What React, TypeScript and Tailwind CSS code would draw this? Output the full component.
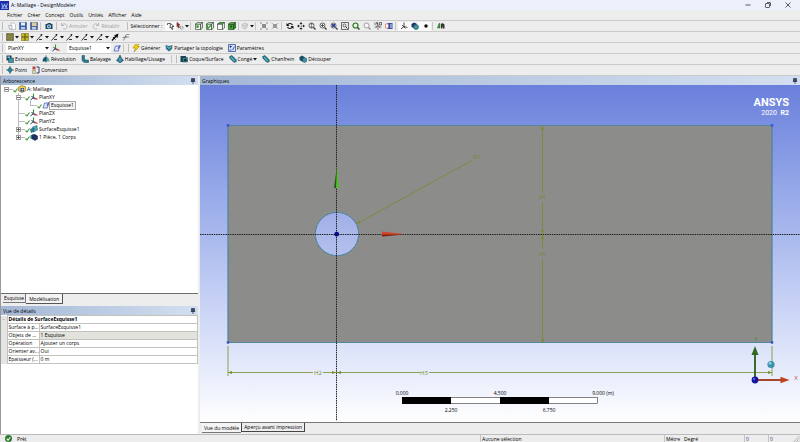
import React from 'react';
import clsx from 'clsx';

interface IconProps {
  children: React.ReactNode;
  className?: string;
}

const Icon: React.FC<IconProps> = ({ children, className = 'w-2 h-2' }) => (
  <svg viewBox="0 0 16 16" fill="none" className={clsx('shrink-0', className)} aria-hidden="true">
    {children}
  </svg>
);

const Caret = () => (
  <svg viewBox="0 0 8 8" className="w-1 h-1 shrink-0" aria-hidden="true">
    <path d="M0 2h8L4 7z" fill="#111" />
  </svg>
);

/* ---------- toolbar drawings ---------- */

const magnifier = (stroke: string, inner?: React.ReactNode) => (
  <>
    <circle cx="7" cy="7" r="5" stroke={stroke} strokeWidth="1.6" fill="#f6f6f6" />
    <path d="M11 11l4 4" stroke={stroke} strokeWidth="2.6" />
    {inner}
  </>
);

const cube = (front: string, top: string, side: string) => (
  <>
    <path d="M1 4h10v11H1z" fill={front} stroke="#1d3a1d" strokeWidth="1.2" />
    <path d="M1 4l4-3h10l-4 3z" fill={top} stroke="#1d3a1d" strokeWidth="1.2" />
    <path d="M11 4l4-3v11l-4 3z" fill={side} stroke="#1d3a1d" strokeWidth="1.2" />
  </>
);

const ICONS: Record<string, React.ReactNode> = {
  new: (
    <>
      <path d="M6 2h6l3 3v10H6z" fill="#fff" stroke="#8a9099" />
      <path d="M1 7h7v7H3z" fill="#e8edf5" stroke="#7d8896" />
    </>
  ),
  save: (
    <>
      <path d="M1 1h14v14H1z" fill="#3c5fa8" stroke="#27427c" />
      <path d="M4 1h8v6H4z" fill="#eaf0fa" />
      <path d="M4 10h8v5H4z" fill="#b9c9e6" />
    </>
  ),
  saveAs: (
    <>
      <path d="M1 1h14v14H1z" fill="#4b67a4" stroke="#2d447a" />
      <path d="M4 1h9v7H4z" fill="#e0cf9a" />
      <path d="M4 10h8v5H4z" fill="#c0cce0" />
    </>
  ),
  camera: (
    <>
      <path d="M1 4h3l2-2h5l2 2h2v10H1z" fill="#1c4a66" />
      <circle cx="8" cy="9" r="4" fill="#bfe0ef" />
      <circle cx="8" cy="9" r="2" fill="#1c5e80" />
    </>
  ),
  undo: <path d="M3 2v5h5M3 7c2-5 11-4 11 2 0 4-4 6-8 5" stroke="#b3b3b3" strokeWidth="1.8" />,
  redo: <path d="M13 2v5H8M13 7C11 2 2 3 2 9c0 4 4 6 8 5" stroke="#b3b3b3" strokeWidth="1.8" />,
  select: (
    <>
      <path d="M1 3h6M1 3v3" stroke="#222" strokeWidth="1.4" />
      <path d="M7 3l7 6-4 0 2 5-2 1-2-5-2 2z" fill="#fff" stroke="#222" strokeWidth="1.4" />
    </>
  ),
  selectMode: (
    <>
      <path d="M2 1l6 5-3 0 2 5-2 1-2-5-1 2z" fill="#9c2f2f" stroke="#5d1717" />
      <path d="M9 9h5v5H9z" stroke="#444" strokeDasharray="2 1" />
    </>
  ),
  cubeVertex: (
    <>
      {cube('#f3f3f3', '#fff', '#dcdcdc')}
      <circle cx="5" cy="9" r="3" fill="#4aa53b" />
    </>
  ),
  cubeEdge: (
    <>
      {cube('#f3f3f3', '#fff', '#dcdcdc')}
      <path d="M3 6v8M3 14l7-8" stroke="#3d9c32" strokeWidth="2.4" />
    </>
  ),
  cubeFace: cube('#f5f5f5', '#4fbd3c', '#eee'),
  cubeBody: (
    <>
      {cube('#42a52f', '#71cf57', '#2c8420')}
      <path d="M4 7h4v4H4z" fill="#215d18" />
    </>
  ),
  extend: (
    <>
      <path d="M2 5l5-3 6 2v6l-5 4-6-3z" fill="#dedede" stroke="#aaa" />
      <path d="M2 5l6 3 5-4M8 8v6" stroke="#aaa" />
    </>
  ),
  expandSel: (
    <>
      <path d="M4 4h8v8H4z" fill="#8e8e8e" />
      <path d="M1 4V1h3M12 1h3v3M15 12v3h-3M4 15H1v-3M1 1l3 3M15 1l-3 3M15 15l-3-3M1 15l3-3" stroke="#8e8e8e" />
    </>
  ),
  shrinkSel: (
    <>
      <path d="M4 4h8v8H4z" fill="#9a9a9a" />
      <path d="M1 2l3 2M15 2l-3 2M15 14l-3-2M1 14l3-2" stroke="#9a9a9a" strokeWidth="1.4" />
    </>
  ),
  rotate: (
    <>
      <path d="M13 6C11 2 5 2 3 6M3 10c2 4 8 4 10 0" stroke="#111" strokeWidth="2.4" />
      <path d="M1 2v6h6zM15 14V8H9z" fill="#111" />
    </>
  ),
  pan: (
    <>
      <path d="M8 3v10M3 8h10" stroke="#333" strokeWidth="1.4" strokeDasharray="3 2" />
      <path d="M8 0l3 4H5zM8 16l3-4H5zM0 8l4-3v6zM16 8l-4-3v6z" fill="#222" />
    </>
  ),
  zoom: magnifier('#3a3a3a', <path d="M7 3v8M5 5l2-2 2 2M5 9l2 2 2-2" stroke="#222" />),
  zoomIn: magnifier('#3a3a3a', <path d="M7 4v6M4 7h6" stroke="#222" strokeWidth="1.4" />),
  zoomBox: magnifier('#3a3a4a', <path d="M4 4h6v6H4z" fill="#334e9e" />),
  zoomFit: (
    <>
      <path d="M1 1h14v14H1z" fill="#eee" stroke="#333" strokeWidth="1.4" />
      <circle cx="7" cy="7" r="3" stroke="#333" strokeWidth="1.4" />
      <path d="M9 9l4 4" stroke="#333" strokeWidth="2" />
    </>
  ),
  zoomGreen: (
    <>
      <circle cx="7" cy="7" r="5" stroke="#2f6f22" strokeWidth="2.4" fill="#e4f3df" />
      <path d="M11 11l4 4" stroke="#2f4f22" strokeWidth="3" />
    </>
  ),
  zoomPrev: magnifier('#8b8b8b'),
  look: (
    <>
      <path d="M1 10h5M10 10h5M3 8l3 2-3 2M13 8l-3 2 3 2" stroke="#2f8c9c" strokeWidth="1.4" />
      <path d="M8 7v9M6 10l2-3 2 3" stroke="#b52f2f" strokeWidth="1.4" />
      <path d="M2 1v5M8 1H5v2h3v3H5M11 1h4v5h-4z" stroke="#222" strokeWidth="1.2" />
    </>
  ),
  viewport: (
    <>
      <path d="M5 2h10v12H5z" fill="#3753a8" />
      <path d="M1 4h6v8H1z" fill="#fff" stroke="#c0392b" />
      <path d="M10 4h4v8h-4z" fill="#7f9be0" />
    </>
  ),
  triad: <path d="M8 1v8M8 9l7 2M8 9l-6 5M4 6l7 7" stroke="#222" strokeWidth="1.6" />,
  solid: (
    <>
      <path d="M1 4l5-3 5 2v6l-5 3-5-2z" fill="#20356e" />
      <circle cx="10" cy="10" r="5" fill="#3f9696" stroke="#15355e" />
    </>
  ),
  point: <circle cx="8" cy="8" r="3.5" fill="#111" />,
  binocular: (
    <>
      <path d="M1 12L4 3l2 0v9z" fill="#3aa33a" stroke="#1b5b1b" />
      <path d="M8 13V4l3-2 4 3v8h-3V9h-1v4z" fill="#333" />
    </>
  ),
  gridOlive: (
    <>
      <path d="M1 1h14v14H1z" fill="#77743a" stroke="#4e4c22" />
      <path d="M1 6h14M1 10h14M6 1v14M10 1v14" stroke="#a19e63" />
    </>
  ),
  gridYellow: (
    <>
      <path d="M1 1h14v14H1z" fill="#c4b82a" stroke="#6c6512" />
      <path d="M8 1v14M1 8h14" stroke="#59530f" strokeWidth="2" />
    </>
  ),
  edge: (
    <>
      <path d="M1 15L11 4M6 13h6" stroke="#222" strokeWidth="1.8" />
      <path d="M9 2h4l-2 5z" fill="#222" />
    </>
  ),
  edgeThick: (
    <>
      <path d="M2 15L13 3" stroke="#111" strokeWidth="3" />
      <path d="M15 1l-2 9-7-5z" fill="#111" />
      <path d="M4 8l5 5" stroke="#111" strokeWidth="2" />
    </>
  ),
  cross: (
    <>
      <path d="M3 15L8 4M1 9l9-1" stroke="#444" strokeWidth="1.2" />
      <path d="M8 3h7M8 8h6" stroke="#555" strokeWidth="1.2" />
    </>
  ),
  planes: (
    <>
      <path d="M7 1v8" stroke="#2f9a2f" strokeWidth="2.2" />
      <path d="M7 9l8 4" stroke="#c23a2a" strokeWidth="2.4" />
      <path d="M7 9l-6 5M3 6l7 7" stroke="#1c2c6f" strokeWidth="2" />
    </>
  ),
  sketch: (
    <>
      <path d="M5 4h8l-2 10H2z" fill="#dfe5fb" stroke="#3d50ad" strokeWidth="1.4" />
      <path d="M9 9l4-7 3 2-5 6z" fill="#4d60bd" />
    </>
  ),
  generate: <path d="M7 0h7l-4 5h5L4 16l3-8H2z" fill="#f4d20e" stroke="#917a00" />,
  share: (
    <>
      <path d="M1 2l7 2 7-2-1 8-6 5-6-5z" fill="#2a6f86" />
      <path d="M4 5l4 4 4-4" stroke="#a9dbe6" strokeWidth="2" />
    </>
  ),
  params: (
    <>
      <path d="M1 1h14v14H1z" fill="#d6e0f7" stroke="#35509e" strokeWidth="1.6" />
      <path d="M3 5h5M5 3v5M9 12l4-7M3 12h4" stroke="#24408f" strokeWidth="1.6" />
    </>
  ),
  extrude: (
    <>
      <path d="M1 1h10v10H1z" fill="#1e3f57" />
      <path d="M5 6h10v9H5z" fill="#3f93a5" stroke="#173d4f" />
      <path d="M3 3h5v3H3z" fill="#8cc6d0" />
    </>
  ),
  revolve: (
    <>
      <path d="M1 13c0-8 5-9 7-9v9z" fill="#1f5a72" />
      <path d="M8 4c4 0 7 3 7 9H8z" fill="#4fa3b2" />
      <path d="M8 1v14" stroke="#123646" strokeWidth="1.4" />
    </>
  ),
  sweep: (
    <path d="M2 1h5v6c0 3 2 3 4 3h4v5H9c-5 0-7-3-7-7z" fill="#2b7f95" stroke="#123f52" />
  ),
  loft: (
    <>
      <path d="M8 0l3 6 4 5-7 5-7-5 4-5z" fill="#2a7890" stroke="#153f50" />
      <path d="M8 6v7" stroke="#8ccad8" strokeWidth="1.6" />
    </>
  ),
  shell: (
    <>
      <path d="M1 2h11v12H1z" fill="#1c4252" />
      <path d="M5 5h10v9H5z" fill="#2f7f8c" stroke="#123642" />
      <path d="M8 8h5v4H8z" fill="#132f3a" />
    </>
  ),
  fillet: (
    <>
      <path d="M1 3l5-2 8 8 1 4-5 2-8-8z" fill="#2a7f93" stroke="#174757" />
      <path d="M4 4l7 8" stroke="#8fd0dc" strokeWidth="1.6" />
    </>
  ),
  slice: (
    <>
      <path d="M1 4l5-3 5 3v7l-5 2-5-3z" fill="#1d4d63" />
      <path d="M7 7l4-2 4 2v6l-4 2-4-2z" fill="#3b93a4" stroke="#123a49" />
    </>
  ),
  pointTool: (
    <>
      <path d="M8 0v16M0 8h16" stroke="#1d5f78" strokeWidth="1.4" />
      <path d="M8 2l5 6-5 6-5-6z" fill="#2d8096" stroke="#16475a" />
    </>
  ),
  convert: (
    <>
      <path d="M1 1h6v6H1z" fill="#b3453b" />
      <path d="M1 9h6v6H1z" fill="#e2dc9a" stroke="#777" />
      <path d="M9 2h5v12H9" stroke="#27397e" strokeWidth="2" />
    </>
  ),
  project: (
    <>
      <path d="M1 4l6-3 8 2v9l-7 3-7-3z" fill="#e9cf4c" stroke="#6b5a13" />
      <path d="M5 6h7v7H5z" fill="#22458f" />
      <circle cx="9" cy="9" r="2" fill="#cfe0ff" />
    </>
  ),
  surface: (
    <>
      <path d="M5 4l9-3 1 9-9 4z" fill="#49a9bd" stroke="#1c5a70" />
      <path d="M1 8l7-2v7l-6 2z" fill="#2b7e9c" stroke="#1c5a70" />
    </>
  ),
  body: (
    <>
      <path d="M1 5l5-3 4 2v6l-5 3-4-2z" fill="#1c7a7a" />
      <path d="M5 5l5-2 5 3v6l-5 3-5-3z" fill="#1f2f68" stroke="#0f1a44" />
    </>
  ),
};

const CheckMark = () => (
  <svg viewBox="0 0 10 16" className="w-[5px] h-2 shrink-0" fill="none" aria-hidden="true">
    <path d="M1 11l3 3 5-7" stroke="#3f9b2c" strokeWidth="2.2" />
  </svg>
);

/* ---------- toolbars ---------- */

interface ToolProps {
  icon: string;
  title: string;
  label?: string;
  menu?: boolean;
  pressed?: boolean;
  disabled?: boolean;
}

const Tool: React.FC<ToolProps> = ({ icon, title, label, menu, pressed, disabled }) => (
  <button
    type="button"
    title={title}
    aria-label={title}
    disabled={disabled}
    className={clsx(
      'flex items-center justify-center gap-px h-[9px] shrink-0 whitespace-nowrap',
      label ? 'mr-[5px]' : 'min-w-[11px]',
      pressed && 'bg-[#fafafa]',
      disabled ? 'text-[#a0a0a0]' : 'text-black',
    )}
  >
    <Icon>{ICONS[icon]}</Icon>
    {label && <span>{label}</span>}
    {menu && <Caret />}
  </button>
);

const Grip = () => <span className="w-px h-2 ml-[2px] mr-[3px] bg-[#bdbdbd] shrink-0" />;
const Sep = () => <span className="w-px h-2 ml-px mr-[2px] bg-[#c4c4c4] shrink-0" />;

const Bar: React.FC<{ children: React.ReactNode; name: string }> = ({ children, name }) => (
  <div role="toolbar" aria-label={name} className="flex items-center h-[11px] border-b border-[#cbcbcb]">
    <Grip />
    {children}
  </div>
);

const Combo: React.FC<{ label: string; value: string }> = ({ label, value }) => (
  <label className="relative flex items-center h-[10px] w-11 bg-white">
    <span className="sr-only">{label}</span>
    <select defaultValue={value} className="appearance-none w-full h-[10px] pl-[2px] leading-[10px] bg-transparent">
      <option>{value}</option>
    </select>
    <span className="absolute right-px pointer-events-none"><Caret /></span>
  </label>
);

const MENUS = ['Fichier', 'Créer', 'Concept', 'Outils', 'Unités', 'Afficher', 'Aide'];

const TitleBar = () => (
  <header className="flex items-center h-[10px] bg-[#ecf0fa]">
    <Icon className="w-[9px] h-[9px] mr-[2px]">
      <path d="M0 0h16v16H0z" fill="#1c2fa8" />
      <path d="M3 4l2 8 3-6 3 6 2-8" stroke="#9fb4f5" strokeWidth="1.8" />
      <path d="M2 13h12" stroke="#dfe6ff" />
    </Icon>
    <h1 className="flex-1">A: Maillage - DesignModeler</h1>
    <div className="flex items-center gap-3 pr-2">
      <button type="button" aria-label="Réduire">
        <Icon><path d="M3 8h10" stroke="#333" strokeWidth="1.6" /></Icon>
      </button>
      <button type="button" aria-label="Restaurer">
        <Icon>
          <rect x="3" y="5" width="8" height="8" rx="1" stroke="#333" strokeWidth="1.5" />
          <path d="M6 3h6q1 0 1 1v6" stroke="#333" strokeWidth="1.5" />
        </Icon>
      </button>
      <button type="button" aria-label="Fermer">
        <Icon><path d="M3 3l10 10M13 3L3 13" stroke="#333" strokeWidth="1.6" /></Icon>
      </button>
    </div>
  </header>
);

const Toolbars = () => (
  <div>
    <nav className="flex items-center gap-[5px] h-[11px] pl-[7px] border-b border-[#cbcbcb]">
      {MENUS.map((m) => (
        <button key={m} type="button">{m}</button>
      ))}
    </nav>
    <Bar name="Standard">
      <Tool icon="new" title="Nouveau" />
      <Tool icon="save" title="Enregistrer" />
      <Tool icon="saveAs" title="Exporter" />
      <Sep />
      <Tool icon="camera" title="Capture d'image" />
      <Grip />
      <Tool icon="undo" title="Annuler" label="Annuler" disabled />
      <Tool icon="redo" title="Rétablir" label="Rétablir" disabled />
      <Grip />
      <span className="mr-[3px]">Sélectionner :</span>
      <Tool icon="select" title="Nouvelle sélection" pressed />
      <Tool icon="selectMode" title="Mode de sélection" menu />
      <Sep />
      <Tool icon="cubeVertex" title="Points" />
      <Tool icon="cubeEdge" title="Arêtes" />
      <Tool icon="cubeFace" title="Faces" pressed />
      <Tool icon="cubeBody" title="Corps" />
      <Sep />
      <Tool icon="extend" title="Étendre la sélection" menu disabled />
      <Sep />
      <Tool icon="expandSel" title="Développer" disabled />
      <Tool icon="shrinkSel" title="Réduire la sélection" disabled />
      <Sep />
      <Tool icon="rotate" title="Rotation" />
      <Tool icon="pan" title="Panoramique" />
      <Tool icon="zoom" title="Zoom" />
      <Tool icon="zoomIn" title="Agrandir" />
      <Tool icon="zoomBox" title="Zoom par boîte" />
      <Tool icon="zoomFit" title="Zoom d'ajustement" />
      <Tool icon="zoomGreen" title="Loupe" />
      <Tool icon="zoomPrev" title="Vue précédente" />
      <Tool icon="look" title="Vue ISO" />
      <Tool icon="viewport" title="Regarder la face" />
      <Sep />
      <Tool icon="triad" title="Afficher le plan" pressed />
      <Tool icon="solid" title="Afficher le modèle" pressed />
      <Tool icon="point" title="Afficher les points" pressed />
      <Sep />
      <Tool icon="binocular" title="Rechercher" />
    </Bar>
    <Bar name="Couleurs">
      <div className="flex items-center gap-[2px]">
        <Tool icon="gridOlive" title="Couleur des faces" menu />
        <Tool icon="gridYellow" title="Couleur des arêtes" menu />
        <Tool icon="edge" title="Arêtes libres" menu />
        <Tool icon="edge" title="Arêtes simples" menu />
        <Tool icon="edge" title="Arêtes doubles" menu />
        <Tool icon="edge" title="Arêtes triples" menu />
        <Tool icon="edge" title="Arêtes multiples" menu />
      </div>
      <Tool icon="edgeThick" title="Épaisseur" />
      <Tool icon="cross" title="Sommets" />
    </Bar>
    <Bar name="Plan et esquisse">
      <Combo label="Plan" value="PlanXY" />
      <Tool icon="planes" title="Nouveau plan" />
      <span className="w-[6px]" />
      <Combo label="Esquisse" value="Esquisse1" />
      <Tool icon="sketch" title="Nouvelle esquisse" />
      <Sep />
      <Grip />
      <Tool icon="generate" title="Générer" label="Générer" />
      <Tool icon="share" title="Partager la topologie" label="Partager la topologie" />
      <Tool icon="params" title="Paramètres" label="Paramètres" />
    </Bar>
    <Bar name="Modélisation 3D">
      <Tool icon="extrude" title="Extrusion" label="Extrusion" />
      <Tool icon="revolve" title="Révolution" label="Révolution" />
      <Tool icon="sweep" title="Balayage" label="Balayage" />
      <Tool icon="loft" title="Habillage/Lissage" label="Habillage/Lissage" />
      <Sep />
      <Grip />
      <Tool icon="shell" title="Coque/Surface" label="Coque/Surface" />
      <Tool icon="fillet" title="Congé" label="Congé" menu />
      <Tool icon="fillet" title="Chanfrein" label="Chanfrein" />
      <Tool icon="slice" title="Découper" label="Découper" />
    </Bar>
    <Bar name="Concept">
      <Tool icon="pointTool" title="Point" label="Point" />
      <Tool icon="convert" title="Conversion" label="Conversion" />
    </Bar>
  </div>
);

/* ---------- left column ---------- */

const PanelTitle: React.FC<{ children: React.ReactNode }> = ({ children }) => (
  <div className="flex items-center justify-between h-[9px] px-[2px] shrink-0 bg-linear-to-r from-[#a3b7d5] to-[#d3dff0]">
    <h2>{children}</h2>
    <button type="button" aria-label="Épingler">
      <Icon className="w-[6px] h-[6px]">
        <path d="M4 1h8v8H4zM2 9h12M8 9v7" fill="#3d4a66" stroke="#2f3a55" strokeWidth="2" />
      </Icon>
    </button>
  </div>
);

interface TreeNode {
  label: string;
  icon: string;
  level: number;
  expander?: '+' | '-';
  selected?: boolean;
  last?: boolean;
}

const TREE: TreeNode[] = [
  { label: 'A: Maillage', icon: 'project', level: 0, expander: '-', last: true },
  { label: 'PlanXY', icon: 'planes', level: 1, expander: '-' },
  { label: 'Esquisse1', icon: 'sketch', level: 2, selected: true, last: true },
  { label: 'PlanZX', icon: 'planes', level: 1 },
  { label: 'PlanYZ', icon: 'planes', level: 1 },
  { label: 'SurfaceEsquisse1', icon: 'surface', level: 1, expander: '+' },
  { label: '1 Pièce, 1 Corps', icon: 'body', level: 1, expander: '+', last: true },
];

const TreeRow: React.FC<{ node: TreeNode }> = ({ node }) => (
  <li role="treeitem" aria-selected={!!node.selected} className="flex items-center h-2 whitespace-nowrap">
    {node.level > 0 && <span className="w-3" />}
    {node.level > 1 && (
      <svg viewBox="0 0 12 8" className="w-3 h-2 shrink-0" aria-hidden="true">
        <path d="M5.500 0v8" stroke="#bbb" />
      </svg>
    )}
    <svg viewBox="0 0 12 8" className="w-3 h-2 shrink-0" fill="none" aria-hidden="true">
      {node.level > 0 && <path d={node.last ? 'M5.5 0v4' : 'M5.5 0v8'} stroke="#bbb" />}
      <path d="M5 4.5h7" stroke="#bbb" />
      {node.expander && (
        <>
          <rect x="3.5" y="2.5" width="4" height="4" fill="#fff" stroke="#a0a0a0" />
          <path d={node.expander === '+' ? 'M4 4.5h3M5.5 3v3' : 'M4 4.5h3'} stroke="#444" strokeWidth="0.8" />
        </>
      )}
    </svg>
    <CheckMark />
    <Icon>{ICONS[node.icon]}</Icon>
    <span className={clsx('leading-[7px] px-px', node.selected && 'bg-[#f6f6f6] outline outline-[#a5a5a5]')}>
      {node.label}
    </span>
  </li>
);

const DETAILS = [
  ['Surface à p...', 'SurfaceEsquisse1'],
  ['Objets de ...', '1 Esquisse'],
  ['Opération', 'Ajouter un corps'],
  ['Orienter av...', 'Oui'],
  ['Epaisseur (...', '0 m'],
];

const LeftColumn = () => (
  <aside className="flex flex-col w-1/4 shrink-0 pr-[2px] border-l border-[#9a9a9a]">
    <PanelTitle>Arborescence</PanelTitle>
    <ul role="tree" className="grow-7 basis-0 bg-white border-b border-[#6e6e6e]">
      {TREE.map((n) => (
        <TreeRow key={n.label} node={n} />
      ))}
    </ul>
    <div className="flex items-start h-3 pl-[2px] shrink-0" role="tablist">
      <button type="button" role="tab" aria-selected={false} className="h-[9px] px-px border-b border-r border-[#777]">
        Esquisse
      </button>
      <button type="button" role="tab" aria-selected className="h-[10px] px-[3px] border-b border-r border-[#555] bg-[#f4f4f4]">
        Modélisation
      </button>
    </div>
    <PanelTitle>Vue de détails</PanelTitle>
    <div className="grow-4 basis-0 bg-white">
      <table className="w-full table-fixed border-collapse">
        <colgroup>
          <col className="w-[6px]" />
          <col className="w-8" />
          <col />
        </colgroup>
        <thead>
          <tr className="h-2">
            <th className="p-0 bg-[#e4e4e4] text-[#777] font-normal leading-[7px]">−</th>
            <th colSpan={2} className="p-0 pl-px text-left font-bold border border-[#c3c3bd] leading-[7px]">
              Détails de SurfaceEsquisse1
            </th>
          </tr>
        </thead>
        <tbody>
          {DETAILS.map(([name, value], i) => (
            <tr key={name} className="h-2">
              <td className="p-0 bg-[#e4e4e4]" />
              <th scope="row" className="p-0 pl-px text-left font-normal whitespace-nowrap border border-[#c3c3bd] leading-[7px]">
                {name}
              </th>
              <td className={clsx('p-0 pl-px border border-[#c3c3bd] leading-[7px]', i === 1 && 'bg-[#e2e3dc]')}>
                {value}
              </td>
            </tr>
          ))}
        </tbody>
      </table>
    </div>
  </aside>
);

/* ---------- model view ---------- */

const OLIVE = '#7a8a2c';

const Model = () => (
  <svg
    viewBox="200 85 600 336"
    preserveAspectRatio="xMidYMin meet"
    className="w-full h-full"
    fill="none"
    role="img"
    aria-label="Plaque percée"
  >
    <defs>
      <linearGradient id="hole" x1="0" y1="0" x2="0" y2="1">
        <stop offset="0" stopColor="#a0aee6" />
        <stop offset="1" stopColor="#b4c1ee" />
      </linearGradient>
    </defs>

    <rect x="228" y="125.500" width="544" height="217" fill="#8c8c8a" stroke="#57759a" />
    <rect x="228" y="125.500" width="544" height="217" stroke="#4e9a9c" strokeDasharray="1 1" />
    {[[228, 125.5], [772, 125.5], [228, 342.5], [772, 342.5]].map(([x, y]) => (
      <circle key={`${x}-${y}`} cx={x} cy={y} r="1.4" fill="#3f55cf" />
    ))}
    <circle cx="337" cy="234" r="21.7" fill="url(#hole)" stroke="#4a74a8" />
    <circle cx="337" cy="234" r="21.7" stroke="#5fa39a" strokeDasharray="2 2" />

    {/* sketch axes */}
    <path d="M336.500 85v336M200 234.500h600" stroke="#222" strokeDasharray="1.5 0.8" />
    <circle cx="336.7" cy="234.2" r="2.4" fill="#0b0b7c" />
    <path d="M337 166l-3 22h5z" fill="#52c02a" />
    <path d="M337 166l-3 22h2z" fill="#2b4f1c" />
    <path d="M404 234l-22-2.500v5z" fill="#d0472c" />
    <path d="M404 234.500l-22 0v2z" fill="#7c2413" />

    {/* dimensions */}
    <g stroke={OLIVE} strokeWidth="0.8">
      <path d="M358 223l114-62.500" />
      <path d="M542.500 126v67M542.500 202v47M542.500 259v83" />
      <path d="M228 346v30M772 346v30M228 372.500h85M323 372.500h97M429 372.500h343" />
    </g>
    <g fill={OLIVE}>
      <path d="M356 224l3-3.200 1.500 2.200z" />
      <path d="M542.500 126l-1.500 4h3zM542.500 234l-1.500-4h3zM542.500 235l-1.500 4h3zM542.500 343l-1.500-4h3z" />
      <path d="M228 372.500l4-1.500v3zM336 372.500l-4-1.500v3zM337 372.500l4-1.500v3zM772 372.500l-4-1.500v3z" />
    </g>
    <g fill={OLIVE} fontSize="6" textAnchor="middle">
      <text x="477" y="159">R1</text>
      <text x="542" y="199">V4</text>
      <text x="542" y="256">V5</text>
      <text x="318" y="375">H2</text>
      <text x="424" y="375">H3</text>
    </g>

    {/* ruler */}
    <rect x="402.500" y="397.500" width="195" height="6" fill="#fff" stroke="#333" strokeWidth="0.6" />
    <path d="M402 397h49v7h-49zM500 397h49v7h-49z" fill="#000" />
    <g fill="#000" fontSize="5" textAnchor="middle">
      <text x="402" y="395">0,000</text>
      <text x="500" y="395">4,500</text>
      <text x="603" y="395">9,000 (m)</text>
      <text x="451" y="412">2,250</text>
      <text x="549" y="412">6,750</text>
    </g>

    {/* triad */}
    <path d="M755 380v-26" stroke="#2c5a1c" strokeWidth="1.8" />
    <path d="M755 346l-3.500 9h7z" fill="#2f6a1c" />
    <path d="M755 380h26" stroke="#a33016" strokeWidth="1.8" />
    <path d="M789.500 380l-9-3.300v6.600z" fill="#c0401f" />
    <circle cx="755" cy="380" r="3.400" fill="#14149c" />
    <circle cx="754" cy="379" r="1.200" fill="#5a5ae0" />
    <circle cx="771" cy="364.500" r="3.600" fill="#3d93ad" />
    <circle cx="770" cy="363.300" r="1.400" fill="#8fd0df" />
    <text x="756" y="341" fontSize="6" fill="#3f8a35" textAnchor="middle">Y</text>
    <text x="796" y="380" fontSize="6" fill="#c54a3a" textAnchor="middle">X</text>

    <g fill="#fff" fontFamily="Roboto, sans-serif">
      <text x="789" y="106" fontSize="11" fontWeight="700" textAnchor="end">ANSYS</text>
      <text x="777" y="115" fontSize="7" textAnchor="end">2020</text>
      <text x="789" y="115" fontSize="7" fontWeight="700" textAnchor="end">R2</text>
    </g>
  </svg>
);

const Graphics = () => (
  <main className="flex flex-col flex-1 min-w-0">
    <PanelTitle>Graphiques</PanelTitle>
    <div className="flex-1 min-h-0 bg-linear-to-b from-[#6a80db] to-white">
      <Model />
    </div>
    <div className="flex items-start h-3 pl-[2px] border-t border-[#777] shrink-0" role="tablist">
      <button type="button" role="tab" aria-selected className="h-[10px] px-[2px] border-b border-[#777] bg-[#f4f4f4]">
        Vue du modèle
      </button>
      <button type="button" role="tab" aria-selected={false} className="h-[9px] px-[2px] border-x border-b border-[#444]">
        Aperçu avant impression
      </button>
    </div>
  </main>
);

const StatusBar = () => (
  <footer className="flex items-center h-2 border-t border-[#bcbcbc]">
    <div className="flex items-center flex-1 pl-[5px] gap-[5px]">
      <Icon className="w-[7px] h-[7px]">
        <circle cx="8" cy="8" r="8" fill="#2b7a2b" />
        <path d="M4 8l3 4 5-7" stroke="#fff" strokeWidth="2.4" />
      </Icon>
      <span>Prêt</span>
    </div>
    <span className="w-[184px] pl-px border-l border-[#c4c4c4]">Aucune sélection</span>
    <span className="flex gap-1 w-20 pl-px border-l border-[#c4c4c4]">
      <span>Métre</span>
      <span>Degré</span>
    </span>
    <span className="w-6 pl-px border-l border-[#c4c4c4] text-[#25497c]">0</span>
    <span className="w-6 pl-px border-l border-[#c4c4c4] text-[#25497c]">0</span>
    <Icon><path d="M2 15L15 2M7 15l8-8M12 15l3-3" stroke="#999" strokeWidth="1.4" /></Icon>
  </footer>
);

export default function App() {
  return (
    <div className="flex flex-col h-screen overflow-hidden bg-[#ededed] text-black text-[5px] leading-[8px] font-['Open_Sans','Noto_Sans',sans-serif]">
      <TitleBar />
      <Toolbars />
      <div className="flex flex-1 min-h-0">
        <LeftColumn />
        <Graphics />
      </div>
      <StatusBar />
    </div>
  );
}
